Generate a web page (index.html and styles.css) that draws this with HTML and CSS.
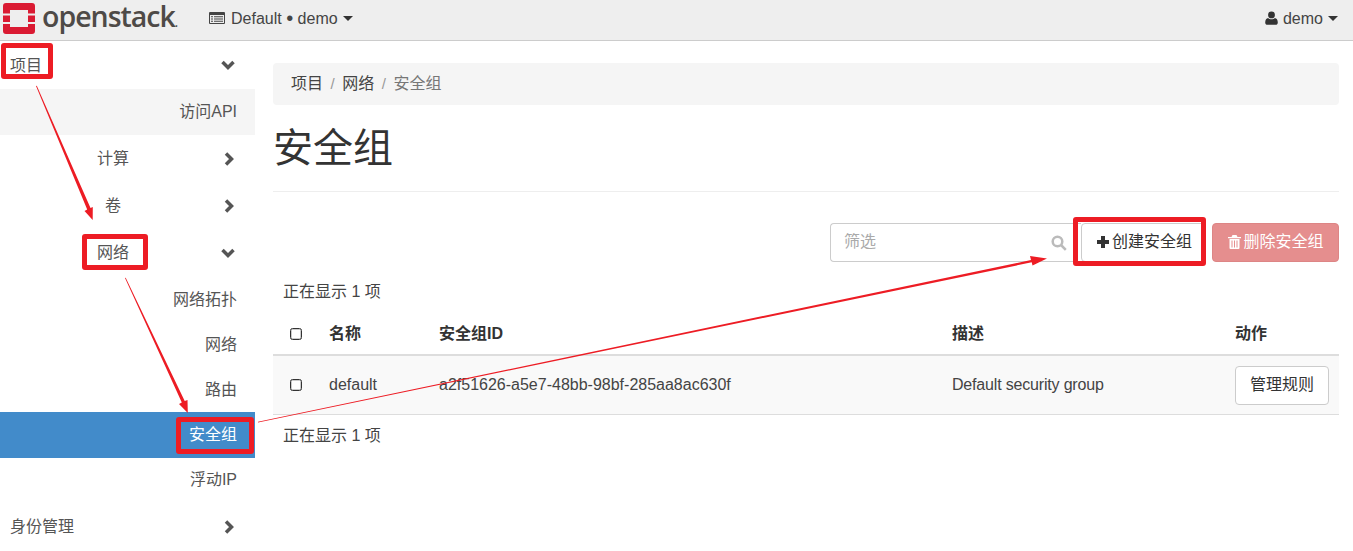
FILE: index.html
```html
<!DOCTYPE html>
<html lang="zh">
<head>
<meta charset="utf-8">
<title>安全组</title>
<link rel="stylesheet" href="styles.css">
</head>
<body>
<header class="navbar">
  <a class="brand">
    <svg class="logo" viewBox="0 0 32 31" width="32" height="31"><path fill="#da1a32" fill-rule="evenodd" d="M3 0H29a3 3 0 0 1 3 3V10.500H25V7H7V10.500H0V3A3 3 0 0 1 3 0ZM0 12.500H7V19H0ZM25 12.500H32V19H25ZM0 21H7V24H25V21H32V28a3 3 0 0 1-3 3H3a3 3 0 0 1-3-3Z"/></svg>
    <span class="brand-text">openstack<small>.</small></span>
  </a>
  <a class="project">
    <svg class="ic-list" viewBox="0 0 16 12" width="16" height="12"><path fill="#444" fill-rule="evenodd" d="M1 0H15a1 1 0 0 1 1 1V11a1 1 0 0 1-1 1H1a1 1 0 0 1-1-1V1a1 1 0 0 1 1-1ZM1 3V11H15V3ZM2 4.200H4V5.200H2ZM5 4.200H14V5.200H5ZM2 6.500H4V7.500H2ZM5 6.500H14V7.500H5ZM2 8.800H4V9.800H2ZM5 8.800H14V9.800H5Z"/></svg>
    <span>Default <b class="dot">•</b> demo</span><i class="caret"></i>
  </a>
  <a class="user">
    <svg viewBox="0 0 13 14" width="13" height="14"><path fill="#333" d="M6.500 0.500a3.400 3.400 0 1 1 0 6.800a3.400 3.400 0 1 1 0-6.800ZM3.200 6.900C4 7.900 5.200 8.300 6.500 8.300S9 7.900 9.800 6.900C11.600 7.200 12.800 8.600 12.800 11.400C12.800 12.900 11.900 13.700 10.600 13.700H2.400C1.100 13.700 0.200 12.900 0.200 11.400C0.200 8.600 1.400 7.200 3.200 6.900Z"/></svg>
    <span>demo</span><i class="caret"></i>
  </a>
</header>
<div class="layout">
  <nav class="sidebar">
    <a class="nav-item top tall">项目<svg class="chev" viewBox="0 0 14 14" width="14" height="14"><path d="M1.500 4L7 9.500L12.500 4" /></svg></a>
    <a class="nav-item leaf shaded lift">访问API</a>
    <a class="nav-item mid">计算<svg class="chev side" viewBox="0 0 14 14" width="14" height="14"><path d="M4 1.500L9.500 7L4 12.500" /></svg></a>
    <a class="nav-item mid">卷<svg class="chev side" viewBox="0 0 14 14" width="14" height="14"><path d="M4 1.500L9.500 7L4 12.500" /></svg></a>
    <a class="nav-item mid">网络<svg class="chev" viewBox="0 0 14 14" width="14" height="14"><path d="M1.500 4L7 9.500L12.500 4" /></svg></a>
    <a class="nav-item leaf">网络拓扑</a>
    <a class="nav-item leaf">网络</a>
    <a class="nav-item leaf">路由</a>
    <a class="nav-item leaf active lift">安全组</a>
    <a class="nav-item leaf lift">浮动IP</a>
    <a class="nav-item top">身份管理<svg class="chev side" viewBox="0 0 14 14" width="14" height="14"><path d="M4 1.500L9.500 7L4 12.500" /></svg></a>
  </nav>
  <main class="content">
    <ol class="breadcrumb">
      <li>项目</li><li class="sep">/</li><li>网络</li><li class="sep">/</li><li class="current">安全组</li>
    </ol>
    <h1 class="page-title">安全组</h1>
    <div class="actions">
      <div class="filter">
        <span class="placeholder">筛选</span>
        <svg class="search" viewBox="0 0 16 16" width="16" height="16"><circle cx="6.500" cy="6.500" r="4.800"/><path d="M10 10L14.800 14.800"/></svg>
      </div>
      <button class="btn create"><svg viewBox="0 0 12 12" width="12" height="12"><path fill="#333" d="M4 0H8V4H12V8H8V12H4V8H0V4H4Z"/></svg>创建安全组</button>
      <button class="btn remove"><svg viewBox="0 0 13 14" width="13" height="14"><path fill="#fff" fill-rule="evenodd" d="M4.500 0H8.500L9.500 2H13V3.200H0V2H3.500ZM1.500 4H11.500V13a1 1 0 0 1-1 1H2.500a1 1 0 0 1-1-1ZM3.500 5.500V12.500H4.500V5.500ZM6 5.500V12.500H7V5.500ZM8.500 5.500V12.500H9.500V5.500Z"/></svg>删除安全组</button>
    </div>
    <div class="count">正在显示 1 项</div>
    <div class="table">
      <div class="row head">
        <div class="c-check"><i class="check"></i></div>
        <div class="c-name">名称</div>
        <div class="c-id">安全组ID</div>
        <div class="c-desc">描述</div>
        <div class="c-act">动作</div>
      </div>
      <div class="row body">
        <div class="c-check"><i class="check"></i></div>
        <div class="c-name cell-text">default</div>
        <div class="c-id cell-text">a2f51626-a5e7-48bb-98bf-285aa8ac630f</div>
        <div class="c-desc cell-text desc-text">Default security group</div>
        <div class="c-act"><button class="btn manage">管理规则</button></div>
      </div>
    </div>
    <div class="count foot">正在显示 1 项</div>
  </main>
</div>

<div class="mark m-project"></div>
<div class="mark m-network"></div>
<div class="mark m-group"></div>
<div class="mark m-create"></div>
<svg class="arrows" viewBox="0 0 1353 551" width="1353" height="551">
  <g fill="#ed1c24">
    <path d="M36 86L36.800 85.700L90.500 208L92.800 207L92.700 220L84.500 211L87.200 209.500Z"/>
    <path d="M125 278L125.700 277.700L184.700 401L187.500 400L187.800 413L179 404L181.800 402.600Z"/>
    <path d="M258 421.700L1031 260L1030 256L1047 258.500L1032.500 265.500L1031.700 262.300L258 422.500Z"/>
  </g>
</svg>
</body>
</html>
```
FILE: styles.css
```css
* { box-sizing: border-box; }
html, body { margin: 0; padding: 0; }
body {
  position: relative;
  width: 1353px;
  height: 551px;
  overflow: hidden;
  background: #fff;
  color: #444;
  font: 16px/21px "Liberation Sans", "Noto Sans CJK SC", sans-serif;
}
.navbar {
  display: flex;
  align-items: center;
  height: 41px;
  padding-bottom: 4px;
  background: #eee;
  border-bottom: 1px solid #ccc;
}
.brand { display: flex; align-items: center; padding-left: 3px; width: 209px; }
.logo { flex: none; }
.brand-text {
  margin: 2px 0 0 7px;
  font: 600 28.500px/30px "Open Sans", sans-serif;
  letter-spacing: -1px;
  color: #4e4a47;
}
.brand-text small { font-size: 12px; letter-spacing: 0; }
.project, .user { display: flex; align-items: center; color: #444; }
.project svg { margin-right: 6px; }
.dot { font-weight: 400; font-size: 20px; line-height: 1; vertical-align: -1px; }
.user { margin-left: auto; padding-right: 15px; }
.user svg { margin-right: 5px; }
.caret {
  display: inline-block;
  margin-left: 5px;
  border-top: 5px solid #333;
  border-left: 5px solid transparent;
  border-right: 5px solid transparent;
}
.layout { display: flex; }
.sidebar { flex: none; width: 255px; }
.nav-item {
  display: flex;
  align-items: center;
  position: relative;
  height: 45px;
  color: #555;
}
.top { height: 47px; padding-left: 10px; }
.tall { height: 48px; }
.mid { height: 47px; padding-left: 97px; }
.leaf { justify-content: flex-end; padding-right: 18px; }
.lift { padding-bottom: 2px; }
.shaded { background: #f5f5f5; height: 46px; }
.nav-item:nth-child(6) { height: 46px; }
.active { background: #428bca; color: #fff; height: 46px; }
.nav-item:nth-child(4) { padding-left: 105px; }
.chev {
  position: absolute;
  right: 20px;
  top: 50%;
  margin-top: -7px;
  fill: none;
  stroke: #555;
  stroke-width: 3.500;
}
.side { right: 19px; }
.content { flex: 1; padding: 22px 14px 0 18px; min-width: 0; }
.breadcrumb {
  display: flex;
  align-items: center;
  gap: 7.500px;
  list-style: none;
  margin: 0;
  height: 42px;
  padding: 0 18px 2px;
  background: #f5f5f5;
  border-radius: 4px;
  color: #444;
}
.sep { color: #999; font-size: 15px; }
.current { color: #777; }
.page-title {
  margin: 0;
  height: 87px;
  padding-top: 17px;
  font-weight: 400;
  font-size: 40px;
  line-height: 52px;
  color: #333;
  border-bottom: 1px solid #eee;
}
.actions {
  display: flex;
  justify-content: flex-end;
  margin-top: 31px;
  height: 39px;
}
.filter {
  display: flex;
  align-items: center;
  justify-content: space-between;
  width: 251px;
  height: 39px;
  padding: 0 14px 2px 13px;
  border: 1px solid #ccc;
  border-right: 0;
  border-radius: 4px 0 0 4px;
}
.placeholder { color: #aaa; }
.search { fill: none; stroke: #bbb; stroke-width: 2.500; margin-top: 2px; }
.btn {
  display: inline-flex;
  align-items: center;
  justify-content: center;
  border: 1px solid #ccc;
  background: #fff;
  color: #333;
  font: inherit;
  border-radius: 4px;
  padding: 0 0 2px;
}
.create { width: 125px; height: 39px; gap: 3px; padding-left: 2px; }
.remove { width: 127px; height: 39px; gap: 2px; margin-left: 6px; padding-left: 1px; background: #e58e8e; border-color: #dd8585; color: #fff; }
.count { height: 21px; margin-top: 19px; padding-left: 10px; color: #444; }
.foot { margin-top: 10px; }
.table { margin-top: 11px; }
.row { display: flex; align-items: center; }
.head { height: 43px; border-bottom: 2px solid #ddd; font-weight: 700; color: #333; }
.body { height: 59px; background: #f9f9f9; border-bottom: 1px solid #ddd; }
.c-check { flex: none; width: 56px; padding-left: 17px; display: flex; }
.check {
  width: 12px;
  height: 12px;
  border: 1px solid #333;
  border-radius: 2.500px;
  background: #fff;
  box-shadow: inset 0 0 0 0.500px #999;
}
.c-name { flex: none; width: 110px; }
.c-id { flex: none; width: 513px; }
.c-desc { flex: none; width: 283px; }
.c-act { flex: 1; }
.cell-text { padding-bottom: 2px; }
.desc-text { letter-spacing: -0.180px; }
.manage { width: 94px; height: 39px; }
.mark {
  position: absolute;
  border: 5px solid #ed1c24;
  border-radius: 3px;
}
.m-project { left: 1px; top: 43px; width: 52px; height: 36px; }
.m-network { left: 82px; top: 234px; width: 66px; height: 36px; }
.m-group { left: 176px; top: 417px; width: 78px; height: 37px; }
.m-create { left: 1073px; top: 217px; width: 133px; height: 49px; }
.arrows { position: absolute; left: 0; top: 0; pointer-events: none; }
```
